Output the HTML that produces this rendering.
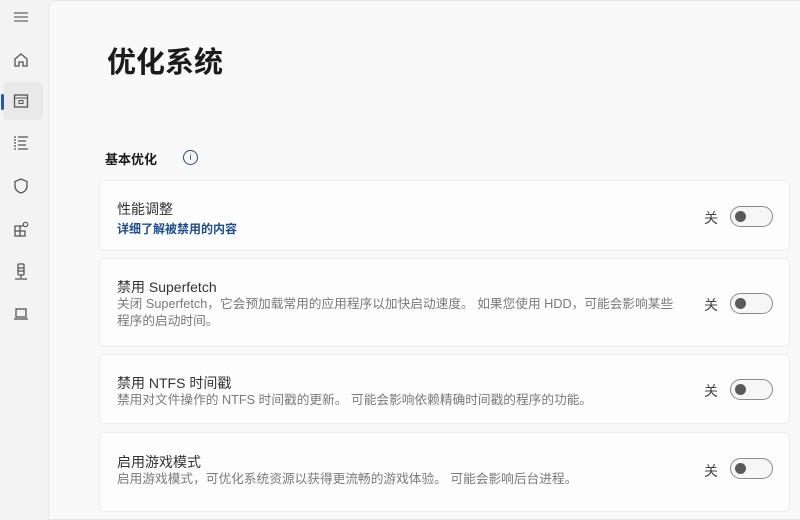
<!DOCTYPE html>
<html><head><meta charset="utf-8"><style>
*{margin:0;padding:0;box-sizing:border-box}
body{width:800px;height:505px;overflow:hidden;background:#f3f3f3;font-family:"Liberation Sans","Noto Sans CJK SC",sans-serif;position:relative;color:#1b1b1b}
.side svg{position:absolute;left:12px}
.main{position:absolute;left:48px;top:0;width:760px;height:520px;background:#f9f9f9;border:1px solid #e8e8e8;border-radius:8px 0 0 0}
h1{position:absolute;left:107px;top:39px;font-size:29px;font-weight:bold}
.sec{position:absolute;left:105px;top:149px;font-size:13px;font-weight:bold}
.info{position:absolute;left:183px;top:150px;width:15px;height:15px;border:1.3px solid #2a4a7a;border-radius:50%;font-size:9px;text-align:center;line-height:12px;color:#2a4a7a}
.card{position:absolute;left:99px;width:691px;background:#fdfdfd;border:1px solid #ebebeb;border-radius:5px}
.t{position:absolute;left:17px;font-size:14px;color:#333}
.d{position:absolute;left:17px;font-size:12.7px;color:#7a7a7a;line-height:17px;white-space:nowrap}
.l{position:absolute;left:17px;font-size:12px;color:#1f4e8c;font-weight:bold}
.g{position:absolute;right:16px;width:43px;height:21px;border:1.3px solid #8a8a8a;border-radius:11px;background:#f6f6f6}
.g:after{content:"";position:absolute;left:4px;top:4px;width:11px;height:11px;border-radius:50%;background:#5a5a5a}
.k{position:absolute;right:71px;font-size:14px;color:#444}
</style></head><body>
<div class="side">
<svg style="top:9px" width="18" height="16" viewBox="0 0 18 16"><path d="M2 4h14M2 8h14M2 12h14" stroke="#666" stroke-width="1.3"/></svg>
<svg style="top:51px" width="18" height="18" viewBox="0 0 18 18"><path d="M3 8l6-5 6 5v7h-4v-4H7v4H3z" fill="none" stroke="#555" stroke-width="1.3"/></svg>
<div style="position:absolute;left:3px;top:82px;width:40px;height:38px;background:#e9e9e9;border-radius:5px"></div>
<div style="position:absolute;left:1px;top:94px;width:3px;height:16px;background:#1f5aa6;border-radius:2px"></div>
<svg style="top:92px" width="18" height="18" viewBox="0 0 18 18"><rect x="2.5" y="3" width="13" height="12" fill="none" stroke="#555" stroke-width="1.3"/><path d="M2.5 6h13" stroke="#555"/><rect x="7" y="8.5" width="4" height="3" fill="none" stroke="#555"/></svg>
<svg style="top:134px" width="18" height="18" viewBox="0 0 18 18"><path d="M2 3h2M2 6h2M2 9h2M2 12h2M2 15h2M6 3h10M6 7h8M6 11h8M6 15h10" stroke="#555" stroke-width="1.3"/></svg>
<svg style="top:177px" width="18" height="18" viewBox="0 0 18 18"><path d="M9 2l6 2.5v4.5c0 4-3 6-6 7-3-1-6-3-6-7V4.5z" fill="none" stroke="#555" stroke-width="1.3"/></svg>
<svg style="top:220px" width="18" height="18" viewBox="0 0 18 18"><path d="M3 6h5v5H3zM3 11h5v5H3zM8 11h5v5H8zM8 6h3" fill="none" stroke="#555" stroke-width="1.3"/><circle cx="13.5" cy="4.5" r="2.2" fill="none" stroke="#555" stroke-width="1.2"/></svg>
<svg style="top:262px" width="18" height="20" viewBox="0 0 18 20"><rect x="6" y="2" width="6" height="11" rx="1" fill="none" stroke="#555" stroke-width="1.3"/><path d="M6 6h6M6 9h6M9 13v3M3 17h12" stroke="#555" stroke-width="1.3"/></svg>
<svg style="top:306px" width="18" height="16" viewBox="0 0 18 16"><rect x="4" y="3" width="10" height="8" fill="none" stroke="#555" stroke-width="1.3"/><path d="M2 13h14" stroke="#555" stroke-width="1.3"/></svg>
</div>
<div class="main"></div>
<h1>优化系统</h1>
<div class="sec">基本优化</div><div class="info">i</div>
<div class="card" style="top:180px;height:71px"><div class="t" style="top:18px">性能调整</div><div class="l" style="top:39px">详细了解被禁用的内容</div><div class="k" style="top:27px">关</div><div class="g" style="top:25px"></div></div>
<div class="card" style="top:258px;height:89px"><div class="t" style="top:18px">禁用 Superfetch</div><div class="d" style="top:37px">关闭 Superfetch，它会预加载常用的应用程序以加快启动速度。 如果您使用 HDD，可能会影响某些<br>程序的启动时间。</div><div class="k" style="top:36px">关</div><div class="g" style="top:34px"></div></div>
<div class="card" style="top:354px;height:70px"><div class="t" style="top:18px">禁用 NTFS 时间戳</div><div class="d" style="top:37px">禁用对文件操作的 NTFS 时间戳的更新。 可能会影响依赖精确时间戳的程序的功能。</div><div class="k" style="top:26px">关</div><div class="g" style="top:24px"></div></div>
<div class="card" style="top:432px;height:80px"><div class="t" style="top:19px">启用游戏模式</div><div class="d" style="top:38px">启用游戏模式，可优化系统资源以获得更流畅的游戏体验。 可能会影响后台进程。</div><div class="k" style="top:28px">关</div><div class="g" style="top:25px"></div></div>
</body></html>
